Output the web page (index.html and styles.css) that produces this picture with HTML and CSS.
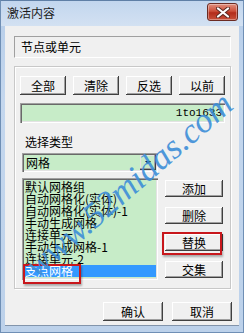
FILE: index.html
```html
<!DOCTYPE html>
<html lang="zh">
<head>
    <meta charset="UTF-8">
    <title>激活内容</title>
    <link rel="stylesheet" href="styles.css">
</head>
<body>
    <div class="window">
        <div class="titlebar">
            <span class="title">激活内容</span>
            <div class="close">
                <svg width="14" height="11" viewBox="0 0 14 11">
                    <path d="M2 1.5 L12 9.5 M12 1.5 L2 9.5" stroke="#5a2a22" stroke-width="4" stroke-linecap="round"/>
                    <path d="M2 1.5 L12 9.5 M12 1.5 L2 9.5" stroke="#ffffff" stroke-width="2.2" stroke-linecap="round"/>
                </svg>
            </div>
        </div>

        <div class="client">
            <div class="static">节点或单元</div>

            <div class="group">
                <div class="btn-row">
                    <button class="btn">全部</button>
                    <button class="btn">清除</button>
                    <button class="btn">反选</button>
                    <button class="btn">以前</button>
                </div>

                <div class="edit">1to1633</div>

                <div class="label">选择类型</div>

                <div class="lower">
                    <div class="left-col">
                        <div class="combo">
                            <span class="combo-text">网格</span>
                            <span class="combo-arrow"></span>
                        </div>
                        <ul class="list">
                            <li>默认网格组</li>
                            <li>自动网格化(实体)</li>
                            <li>自动网格化(实体)-1</li>
                            <li>手动生成网格</li>
                            <li>连接单元</li>
                            <li>手动生成网格-1</li>
                            <li>连接单元-2</li>
                            <li class="selected">支点网格</li>
                        </ul>
                    </div>
                    <div class="right-col">
                        <button class="btn side">添加</button>
                        <button class="btn side">删除</button>
                        <button class="btn side">替换</button>
                        <button class="btn side">交集</button>
                    </div>
                </div>
            </div>

            <div class="footer">
                <button class="btn wide">确认</button>
                <button class="btn wide">取消</button>
            </div>
        </div>

        <!-- annotation marks and watermark lie over the dialog -->
        <div class="mark mark-replace"></div>
        <div class="mark mark-item"></div>
        <div class="watermark">www.52midas.com</div>
    </div>
</body>
</html>
```

FILE: styles.css
```css
/* Page */
body {
    margin: 0;
    padding: 0;
    font-family: 'Noto Sans CJK SC', 'DejaVu Sans', sans-serif;
    font-size: 12px;
    color: #000;
}

/* Window frame */
.window {
    position: relative;
    width: 244px;
    height: 333px;
    box-sizing: border-box;
    padding: 0 4px 6px 4px;
    display: flex;
    flex-direction: column;
    background: linear-gradient(180deg, #b6cde9, #c4d7ee 30%, #bcd1ea);
    border: 1px solid #6f8fb5;
    border-top-color: #5f7fa6;
    overflow: hidden;
}

.titlebar {
    height: 25px;
    display: flex;
    align-items: center;
    justify-content: space-between;
    background: linear-gradient(180deg, #c2d6ee, #d3e1f2);
    margin: 0 -4px;
    padding-left: 6px;
    padding-right: 5px;
}

.title {
    font-size: 12px;
    color: #1c1c1c;
    margin-top: -2px;
}

.close {
    width: 29px;
    height: 16px;
    margin-top: -3px;
    border: 1px solid #6b2b22;
    border-radius: 3px;
    background: linear-gradient(180deg, #e0907f, #cc4f3a 45%, #b32c1a 55%, #c8513a);
    display: flex;
    align-items: center;
    justify-content: center;
    box-shadow: inset 0 0 0 1px rgba(255, 255, 255, 0.35);
}

/* Dialog client area */
.client {
    flex: 1;
    background: #f0f0f0;
    border-bottom: 1px solid #8294ab;
    display: flex;
    flex-direction: column;
    position: relative;
}

.static {
    margin: 10px 0 0 9px;
    width: 217px;
    height: 22px;
    box-sizing: border-box;
    border: 1px solid;
    border-color: #a0a0a0 #fff #fff #a0a0a0;
    padding-left: 6px;
    line-height: 20px;
}

.group {
    margin: 8px 0 0 9px;
    width: 217px;
    height: 223px;
    box-sizing: border-box;
    border: 1px solid #c8c8c8;
    box-shadow: inset 1px 1px 0 #fff, 1px 1px 0 #fff;
    padding: 9px 0 0 5px;
}

/* Classic 3D buttons */
.btn {
    font-family: 'Noto Sans CJK SC', 'DejaVu Sans', sans-serif;
    font-size: 12px;
    color: #000;
    background: #f0f0f0;
    border: none;
    padding: 0;
    margin: 0;
    box-shadow: inset -1px -1px 0 #404040, inset 1px 1px 0 #fff,
        inset -2px -2px 0 #a0a0a0, inset 2px 2px 0 #f0f0f0;
    line-height: 1;
}

.btn-row {
    display: flex;
    gap: 7px;
}

.btn-row .btn {
    width: 46px;
    height: 19px;
}

.edit {
    margin: 8px 0 0 0;
    width: 205px;
    height: 20px;
    box-sizing: border-box;
    background: #c7ecc8;
    box-shadow: inset 1px 1px 0 #a0a0a0, inset 2px 2px 0 #696969,
        inset -1px -1px 0 #fff, inset -2px -2px 0 #e3e3e3;
    text-align: right;
    padding-right: 3px;
    font-family: 'Liberation Mono', 'DejaVu Sans Mono', monospace;
    font-size: 11px;
    line-height: 20px;
}

.label {
    margin: 11px 0 0 5px;
    height: 16px;
    line-height: 16px;
}

.lower {
    display: flex;
    margin-top: 3px;
}

.left-col {
    margin-left: 2px;
    width: 136px;
}

.combo {
    height: 19px;
    box-sizing: border-box;
    background: #c7ecc8;
    box-shadow: inset 1px 1px 0 #a0a0a0, inset 2px 2px 0 #696969,
        inset -1px -1px 0 #fff, inset -2px -2px 0 #e3e3e3;
    display: flex;
    align-items: center;
    justify-content: space-between;
    padding: 2px;
}

.combo-text {
    padding-left: 2px;
    line-height: 15px;
}

.combo-arrow {
    width: 16px;
    height: 15px;
    box-sizing: border-box;
    box-shadow: inset -1px -1px 0 #404040, inset -2px -2px 0 #a0a0a0,
        inset 1px 1px 0 #e3e3e3;
    position: relative;
}

.combo-arrow::after {
    content: '';
    position: absolute;
    left: 5px;
    top: 6px;
    border-left: 3px solid transparent;
    border-right: 3px solid transparent;
    border-top: 3px solid #000;
}

.list {
    list-style: none;
    margin: 6px 0 0 0;
    padding: 3px 2px 0 2px;
    height: 102px;
    box-sizing: border-box;
    background: #c7ecc8;
    box-shadow: inset 1px 1px 0 #a0a0a0, inset 2px 2px 0 #696969,
        inset -1px -1px 0 #fff, inset -2px -2px 0 #e3e3e3;
    overflow: hidden;
}

.list li {
    height: 12px;
    line-height: 12px;
    padding-left: 1px;
    white-space: nowrap;
    font-size: 12px;
}

.list li.selected {
    background: #3399ff;
    color: #fff;
}

.right-col {
    display: flex;
    flex-direction: column;
    margin: 27px 0 0 7px;
}

.btn.side {
    width: 58px;
    height: 17px;
    margin-bottom: 10px;
}

/* Bottom buttons */
.footer {
    display: flex;
    justify-content: flex-end;
    gap: 9px;
    margin: 13px 7px 0 0;
}

.btn.wide {
    width: 60px;
    height: 19px;
}

/* Red annotation boxes */
.mark {
    position: absolute;
    border: 2px solid #c8171c;
    box-shadow: 1px 2px 2px rgba(0, 0, 0, 0.3);
}

.mark-replace {
    left: 161px;
    top: 231px;
    width: 56px;
    height: 19px;
}

.mark-item {
    left: 22px;
    top: 263px;
    width: 54px;
    height: 16px;
}

/* Watermark */
.watermark {
    position: absolute;
    left: 128px;
    top: 184px;
    transform: translate(-50%, -50%) rotate(-41deg);
    font-family: 'Liberation Serif', serif;
    font-style: italic;
    font-size: 35px;
    color: #3d8ed8;
    white-space: nowrap;
    opacity: 0.9;
}
```
